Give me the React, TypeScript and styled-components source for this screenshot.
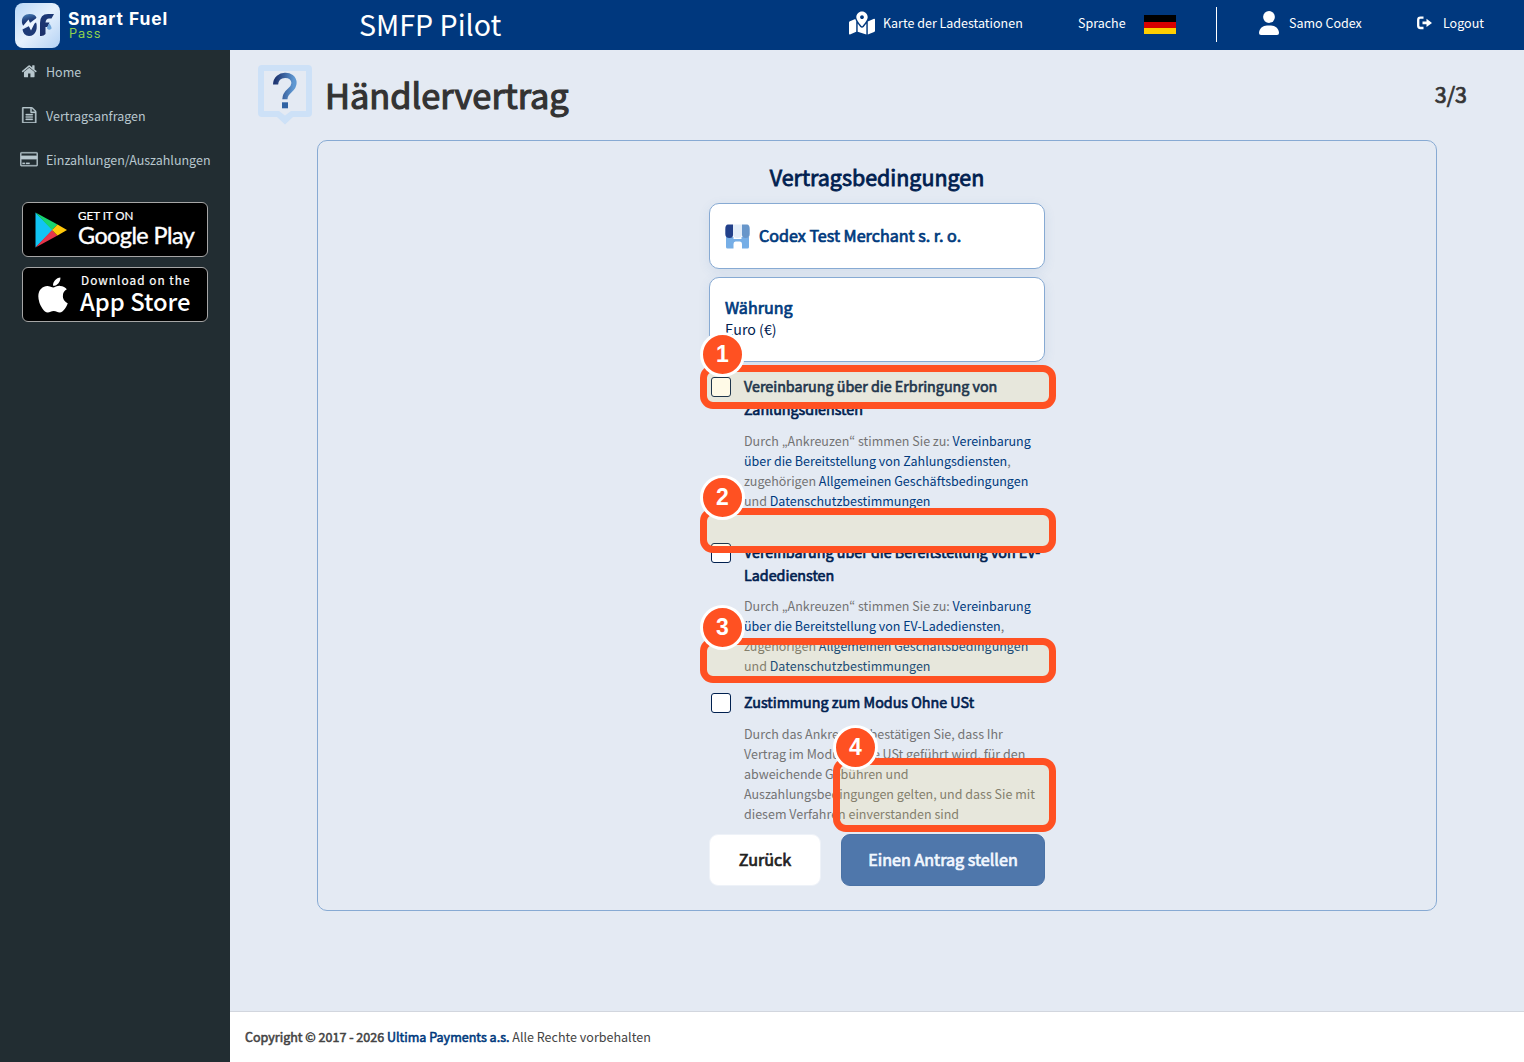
import React from "react";
import styled, { createGlobalStyle, css } from "styled-components";
import { FaApple, FaMapMarkedAlt } from "react-icons/fa";

const GlobalStyle = createGlobalStyle`
  * { box-sizing: border-box; }
  body {
    margin: 0;
    font: 12.51px/20px "Noto Sans CJK KR", "Open Sans", sans-serif;
    color: #333;
    overflow: hidden;
  }
  h1, h2, h3, p { margin: 0; font-weight: 400; }
  a { color: #003a7d; text-decoration: none; }
`;

const semibold = css`
  font-weight: 400;
  -webkit-text-stroke: 0.044em currentColor;
`;

const Page = styled.div`
  position: relative;
  width: 1524px;
  height: 1062px;
  display: grid;
  grid-template: 50px 1fr / 230px 1fr;
  background: #e4eaf3;
`;

/* Top bar */
const Navbar = styled.header`
  grid-column: 1 / -1;
  display: flex;
  align-items: flex-start;
  background: #00387e;
  color: #fff;
`;
const Brand = styled.div`
  display: flex;
  width: 359px;
  padding: 3px 0 0 15px;
  gap: 8px;
`;
const BrandText = styled.div`
  display: flex;
  flex-direction: column;
  padding-top: 7px;
  font-family: Inter, sans-serif;
`;
const BrandName = styled.span`
  font-size: 17.4px;
  line-height: 18px;
  font-weight: 700;
  letter-spacing: 0.95px;
  white-space: nowrap;
`;
const BrandSub = styled.span`
  margin-left: 1px;
  font-size: 12.8px;
  line-height: 12px;
  letter-spacing: 0.85px;
  color: #8fd14f;
`;
const SiteTitle = styled.div`
  width: 490px;
  font-size: 28.6px;
  line-height: 48px;
`;
const NavItem = styled.div<{ $gap: number; $width: number }>`
  display: flex;
  align-items: center;
  height: 46px;
  gap: ${(p) => p.$gap}px;
  width: ${(p) => p.$width}px;
  white-space: nowrap;
`;
const Flag = styled.div`
  width: 32px;
  height: 19px;
  margin-top: 3px;
  background: linear-gradient(#000 0 6.5px, #d80000 6.5px 13px, #ffce00 13px);
`;
const NavDivider = styled.div`
  width: 1px;
  height: 35px;
  margin: 7px 42px 0 0;
  background: #fff;
`;

/* Sidebar */
const Sidebar = styled.nav`
  display: flex;
  flex-direction: column;
  background: #222d32;
  color: #b8c7ce;
`;
const MenuItem = styled.div`
  display: flex;
  align-items: center;
  height: 44px;
  padding-left: 19px;
`;
const MenuIcon = styled.span`
  display: flex;
  justify-content: center;
  width: 20px;
  margin-right: 7px;
  padding-bottom: 2px;
`;
const Badges = styled.div`
  display: flex;
  flex-direction: column;
  gap: 10px;
  padding: 20px 22px;
`;
const StoreBadge = styled.div<{ $pad: number; $gap: number }>`
  display: flex;
  align-items: center;
  gap: ${(p) => p.$gap}px;
  width: 186px;
  height: 55px;
  padding-left: ${(p) => p.$pad}px;
  border: 1px solid #a6a6a6;
  border-radius: 6px;
  background: #000;
  color: #fff;
  white-space: nowrap;
`;
const BadgeText = styled.div<{ $lift: number }>`
  display: flex;
  flex-direction: column;
  padding-bottom: ${(p) => p.$lift}px;
`;
const PlaySmall = styled.span`
  font: 400 11.6px/14px Lato, sans-serif;
  -webkit-text-stroke: 0.2px #fff;
`;
const PlayLarge = styled.span`
  font: 400 23.4px/25px Lato, sans-serif;
  letter-spacing: -0.55px;
  -webkit-text-stroke: 0.4px #fff;
`;
const AppleSmall = styled.span`
  margin-left: 1px;
  font-size: 11.8px;
  line-height: 18px;
  letter-spacing: 1.05px;
  -webkit-text-stroke: 0.2px #fff;
`;
const AppleLarge = styled.span`
  font-size: 23.8px;
  line-height: 23px;
  font-weight: 500;
`;

/* Main column */
const Main = styled.main`
  display: flex;
  flex-direction: column;
`;
const PageHeader = styled.div`
  display: flex;
  align-items: flex-start;
  height: 90px;
  padding: 15px 57px 0 27.5px;
`;
const PageTitle = styled.h1`
  flex: 1;
  margin-left: 12.5px;
  font-size: 34.35px;
  line-height: 59px;
  -webkit-text-stroke: 0.035em currentColor;
`;
const Step = styled.span`
  font-size: 21.4px;
  line-height: 58px;
  -webkit-text-stroke: 0.035em currentColor;
`;
const Panel = styled.section`
  display: flex;
  flex-direction: column;
  align-items: center;
  width: 1120px;
  height: 771px;
  margin-left: 87px;
  padding-top: 23px;
  border: 1px solid #87aad3;
  border-radius: 10px;
`;
const Form = styled.div`
  display: flex;
  flex-direction: column;
  width: 336px;
  color: #00204f;
`;
const FormTitle = styled.h2`
  font-size: 21.45px;
  line-height: 26px;
  margin-bottom: 13px;
  text-align: center;
  -webkit-text-stroke: 0.038em currentColor;
`;
const InfoCard = styled.div<{ $height: number }>`
  display: flex;
  gap: 9px;
  height: ${(p) => p.$height}px;
  margin-bottom: 8px;
  padding: 18px 15px;
  border: 1px solid #87aad3;
  border-radius: 10px;
  background: #fff;
  box-shadow: 0 3px 12px rgba(60, 110, 170, 0.1);
`;
const CardHeading = styled.h3<{ $line: number }>`
  ${semibold}
  font-size: 16.1px;
  line-height: ${(p) => p.$line}px;
  color: #003a7d;
`;
const CardValue = styled.p`
  font-size: 14.2px;
  line-height: 22px;
`;
const Consents = styled.div`
  display: flex;
  flex-direction: column;
  padding-top: 5px;
`;
const Consent = styled.div<{ $after: number }>`
  display: flex;
  gap: 13px;
  padding-left: 2px;
  margin-bottom: ${(p) => p.$after}px;
`;
const Checkbox = styled.span`
  flex: none;
  width: 20px;
  height: 20px;
  margin-top: 2px;
  border: 1px solid #00204f;
  border-radius: 3px;
  background: #fff;
`;
const ConsentTitle = styled.h3`
  ${semibold}
  font-size: 14.3px;
  line-height: 22.86px;
  margin-bottom: 10px;
  white-space: nowrap;
`;
const ConsentText = styled.p`
  color: #737373;
  white-space: nowrap;
`;
const Actions = styled.div`
  display: flex;
  justify-content: space-between;
`;
const Button = styled.button<{ $primary?: boolean }>`
  ${semibold}
  width: ${(p) => (p.$primary ? 204 : 112)}px;
  height: 52px;
  padding: 0 0 2px;
  border: 1px solid ${(p) => (p.$primary ? "#4a72a5" : "#eef2f8")};
  border-radius: 9px;
  background: ${(p) => (p.$primary ? "#4f77ab" : "#fff")};
  color: ${(p) => (p.$primary ? "#f2f7ff" : "#222")};
  font-family: inherit;
  font-size: 16.15px;
`;
const Footer = styled.footer`
  height: 51px;
  margin-top: auto;
  padding: 15px;
  border-top: 1px solid #d2d6de;
  background: #fff;
  color: #444;
  font-size: 12.54px;
`;
const Strong = styled.strong`
  ${semibold}
`;

/* Numbered highlights floating above the form */
const Highlight = styled.div<{ $x: number; $y: number; $w: number; $h: number }>`
  position: absolute;
  left: ${(p) => p.$x}px;
  top: ${(p) => p.$y}px;
  width: ${(p) => p.$w}px;
  height: ${(p) => p.$h}px;
  border: 7px solid #ff5122;
  border-radius: 13px;
  background: rgba(255, 215, 60, 0.12);
`;
const Marker = styled.span`
  position: absolute;
  left: -7px;
  top: -40px;
  width: 45px;
  height: 45px;
  border: 3px solid #fff;
  border-radius: 50%;
  background: #ff5122;
  color: #fff;
  font: bold 23px/38px "Liberation Sans", Arial, sans-serif;
  text-align: center;
`;

const LogoIcon = () => (
  <svg width="45" height="45" viewBox="0 0 45 45">
    <defs>
      <linearGradient id="tile" x1="0" y1="0" x2="1" y2="1">
        <stop offset="0" stopColor="#b9d8f8" />
        <stop offset="0.5" stopColor="#e6f1fd" />
        <stop offset="1" stopColor="#b4d2f4" />
      </linearGradient>
      <linearGradient id="glyph" x1="0" y1="0" x2="0.3" y2="1">
        <stop offset="0" stopColor="#4c86bd" />
        <stop offset="0.6" stopColor="#1d3a77" />
        <stop offset="1" stopColor="#1b2f68" />
      </linearGradient>
      <linearGradient id="flame" x1="0" y1="0" x2="0" y2="1">
        <stop offset="0" stopColor="#1d3a77" />
        <stop offset="1" stopColor="#1b2f68" />
      </linearGradient>
    </defs>
    <rect width="45" height="45" rx="8" fill="url(#tile)" />
    <path d="M7 20C6 14 10 11 14.500 11C18.500 11 21 12.500 21.500 15L9.500 24Q7.500 22.500 7 20Z" fill="url(#glyph)" />
    <path d="M7.500 26.500L21 19.500Q22.500 23 21 28Q19 33 14 33Q8.500 33 7.500 26.500Z" fill="#1d3a77" />
    <path d="M5.500 26L13.500 16.500L15.500 21L22.500 14.500L16 27.500L13.500 22.500Z" fill="#edf6ff" />
    <path d="M25 33V20Q25 11 33 11H39L36.500 15.500H34Q31 15.500 30.500 19.500H34.500L32.500 24H30.500V31Q28.500 33.500 25 33Z" fill="url(#flame)" />
    <path d="M34.300 20.500Q31.700 24 32.200 25.400Q34.300 28 36.400 25.400Q36.900 24 34.300 20.500Z" fill="#6fa4d8" />
  </svg>
);

const UserIcon = () => (
  <svg width="20" height="24" viewBox="0 0 20 24" fill="#fff">
    <circle cx="10" cy="6" r="5.900" />
    <path d="M0 22C0 17.500 4 14.500 8 14.500H12C16 14.500 20 17.500 20 22Q20 24 18 24H2Q0 24 0 22Z" />
  </svg>
);

const LogoutIcon = () => (
  <svg width="16" height="14" viewBox="0 0 16 14">
    <path d="M6.500 1.700H3.500Q1.200 1.700 1.200 4V9.700Q1.200 12 3.500 12H6.500" fill="none" stroke="#fff" strokeWidth="2.300" />
    <path d="M5.500 5.600H9.500V2.800L15 6.900L9.500 11V8.200H5.500Z" fill="#fff" />
  </svg>
);

const HomeIcon = () => (
  <svg width="16.500" height="16.500" viewBox="0 0 1792 1792" fill="currentColor">
    <path d="M1472 992v480q0 26-19 45t-45 19h-384v-384h-256v384h-384q-26 0-45-19t-19-45v-480q0-1 .5-3t.5-3l575-474 575 474q1 2 1 6zm223-69l-62 74q-8 9-21 11h-3q-13 0-21-7l-692-577-692 577q-12 8-24 7-13-2-21-11l-62-74q-8-10-7-23.500t11-21.500l719-599q32-26 76-26t76 26l244 204v-195q0-14 9-23t23-9h192q14 0 23 9t9 23v408l219 182q10 8 11 21.500t-7 23.500z" />
  </svg>
);

const FileIcon = () => (
  <svg width="16.500" height="16.500" viewBox="0 0 1792 1792" fill="currentColor" stroke="currentColor" strokeWidth="40">
    <path d="M1596 380q28 28 48 76t20 88v1152q0 40-28 68t-68 28h-1344q-40 0-68-28t-28-68v-1600q0-40 28-68t68-28h896q40 0 88 20t76 48zm-444-244v376h376q-10-29-22-41l-313-313q-12-12-41-22zm384 1528v-1024h-416q-40 0-68-28t-28-68v-416h-768v1536h1280zm-1024-864q0-14 9-23t23-9h704q14 0 23 9t9 23v64q0 14-9 23t-23 9h-704q-14 0-23-9t-9-23v-64zm736 224q14 0 23 9t9 23v64q0 14-9 23t-23 9h-704q-14 0-23-9t-9-23v-64q0-14 9-23t23-9h704zm0 256q14 0 23 9t9 23v64q0 14-9 23t-23 9h-704q-14 0-23-9t-9-23v-64q0-14 9-23t23-9h704z" />
  </svg>
);

const CardIcon = () => (
  <svg width="18" height="16.500" viewBox="0 0 1920 1792" fill="currentColor" stroke="currentColor" strokeWidth="30">
    <path d="M1760 128q66 0 113 47t47 113v1216q0 66-47 113t-113 47h-1600q-66 0-113-47t-47-113v-1216q0-66 47-113t113-47h1600zm-1600 128q-13 0-22.500 9.500t-9.500 22.500v224h1664v-224q0-13-9.500-22.500t-22.500-9.500h-1600zm1600 1280q13 0 22.500-9.500t9.500-22.500v-608h-1664v608q0 13 9.500 22.500t22.500 9.500h1600zm-1504-128v-128h256v128h-256zm384 0v-128h384v128h-384z" />
  </svg>
);

const PlayIcon = () => (
  <svg width="32" height="36" viewBox="0 0 32 36">
    <path d="M0.500 0.500V35.500L18 18Z" fill="#12c4f4" />
    <path d="M0.500 0.500L22.500 12.500L17 18Z" fill="#18d56f" />
    <path d="M0.500 35.500L22.500 23.500L17 18Z" fill="#e5354b" />
    <path d="M22.500 12.500L32 18L22.500 23.500L17 18Z" fill="#ffc80a" />
  </svg>
);

const HelpIcon = () => (
  <svg width="55" height="60" viewBox="0 0 55 60">
    <defs>
      <linearGradient id="help" x1="0" y1="0.100" x2="1" y2="0.200">
        <stop offset="0" stopColor="#1f3672" />
        <stop offset="1" stopColor="#5f98d2" />
      </linearGradient>
    </defs>
    <path d="M4 0H50Q54 0 54 4V48Q54 52 50 52H35L27 59.500L19 52H4Q0 52 0 48V4Q0 0 4 0Z" fill="#cde1f7" />
    <path d="M6 6H48V46H33L27 50.500L21 46H6Z" fill="#e4eaf3" />
    <path d="M17.600 19.500C18 7.500 36 7.500 36 18C36 26 26.900 25 26.900 34.300" fill="none" stroke="url(#help)" strokeWidth="5.200" />
    <rect x="24" y="37.300" width="6" height="6" fill="#2f62a3" />
  </svg>
);

const MerchantIcon = () => (
  <svg width="25" height="27" viewBox="0 -2 25 27">
    <path d="M1 13H8.500V15H16.500V13H24V23Q24 24.500 22.500 24.500H17V20Q17 17.500 15 17.500H10.500Q8.500 17.500 8.500 20V24.500H2.500Q1 24.500 1 23Z" fill="#76aee6" />
    <path d="M8 0.500H17V10Q17 14 12.500 14Q8 14 8 10Z" fill="#e3edf8" />
    <path d="M3 0.500H8V11Q8 14 4.500 14Q0.300 14 0.300 10V5Q0.300 0.500 3 0.500Z" fill="#22408a" />
    <path d="M17 0.500H22Q24.700 0.500 24.700 5V10Q24.700 14 20.500 14Q17 14 17 11Z" fill="#6796ca" />
  </svg>
);

const highlights = [
  { x: 700, y: 365, w: 356, h: 44 },
  { x: 700, y: 508, w: 356, h: 45 },
  { x: 700, y: 638, w: 356, h: 45 },
  { x: 833, y: 758, w: 223, h: 74 },
];

export default function App() {
  return (
    <Page>
      <GlobalStyle />
      <Navbar>
        <Brand>
          <LogoIcon />
          <BrandText>
            <BrandName>Smart Fuel</BrandName>
            <BrandSub>Pass</BrandSub>
          </BrandText>
        </Brand>
        <SiteTitle>SMFP Pilot</SiteTitle>
        <NavItem $gap={8} $width={229}>
          <FaMapMarkedAlt size={26} />
          Karte der Ladestationen
        </NavItem>
        <NavItem $gap={18} $width={138}>
          Sprache
          <Flag />
        </NavItem>
        <NavDivider />
        <NavItem $gap={10} $width={158}>
          <UserIcon />
          Samo Codex
        </NavItem>
        <NavItem $gap={10} $width={80}>
          <LogoutIcon />
          Logout
        </NavItem>
      </Navbar>

      <Sidebar>
        <MenuItem><MenuIcon><HomeIcon /></MenuIcon>Home</MenuItem>
        <MenuItem><MenuIcon><FileIcon /></MenuIcon>Vertragsanfragen</MenuItem>
        <MenuItem><MenuIcon><CardIcon /></MenuIcon>Einzahlungen/Auszahlungen</MenuItem>
        <Badges>
          <StoreBadge $pad={12} $gap={11}>
            <PlayIcon />
            <BadgeText $lift={2}>
              <PlaySmall>GET IT ON</PlaySmall>
              <PlayLarge>Google Play</PlayLarge>
            </BadgeText>
          </StoreBadge>
          <StoreBadge $pad={10} $gap={7}>
            <FaApple size={40} />
            <BadgeText $lift={6}>
              <AppleSmall>Download on the</AppleSmall>
              <AppleLarge>App Store</AppleLarge>
            </BadgeText>
          </StoreBadge>
        </Badges>
      </Sidebar>

      <Main>
        <PageHeader>
          <HelpIcon />
          <PageTitle>Händlervertrag</PageTitle>
          <Step>3/3</Step>
        </PageHeader>
        <Panel>
          <Form>
            <FormTitle>Vertragsbedingungen</FormTitle>
            <InfoCard $height={66}>
              <MerchantIcon />
              <CardHeading $line={27}>Codex Test Merchant s. r. o.</CardHeading>
            </InfoCard>
            <InfoCard $height={85}>
              <div>
                <CardHeading $line={22}>Währung</CardHeading>
                <CardValue>Euro (€)</CardValue>
              </div>
            </InfoCard>
            <Consents>
              <Consent $after={30}>
                <Checkbox />
                <div>
                  <ConsentTitle>Vereinbarung über die Erbringung von<br />Zahlungsdiensten</ConsentTitle>
                  <ConsentText>
                    Durch „Ankreuzen“ stimmen Sie zu: <a>Vereinbarung<br />über die Bereitstellung von Zahlungsdiensten</a>,<br />
                    zugehörigen <a>Allgemeinen Geschäftsbedingungen</a><br />und <a>Datenschutzbestimmungen</a>
                  </ConsentText>
                </div>
              </Consent>
              <Consent $after={14.5}>
                <Checkbox />
                <div>
                  <ConsentTitle>Vereinbarung über die Bereitstellung von EV-<br />Ladediensten</ConsentTitle>
                  <ConsentText>
                    Durch „Ankreuzen“ stimmen Sie zu: <a>Vereinbarung<br />über die Bereitstellung von EV-Ladediensten</a>,<br />
                    zugehörigen <a>Allgemeinen Geschäftsbedingungen</a><br />und <a>Datenschutzbestimmungen</a>
                  </ConsentText>
                </div>
              </Consent>
              <Consent $after={10}>
                <Checkbox />
                <div>
                  <ConsentTitle>Zustimmung zum Modus Ohne USt</ConsentTitle>
                  <ConsentText>
                    Durch das Ankreuzen bestätigen Sie, dass Ihr<br />Vertrag im Modus Ohne USt geführt wird, für den<br />
                    abweichende Gebühren und<br />Auszahlungsbedingungen gelten, und dass Sie mit<br />diesem Verfahren einverstanden sind
                  </ConsentText>
                </div>
              </Consent>
            </Consents>
            <Actions>
              <Button>Zurück</Button>
              <Button $primary>Einen Antrag stellen</Button>
            </Actions>
          </Form>
        </Panel>
        <Footer>
          <Strong>Copyright © 2017 - 2026 <a>Ultima Payments a.s.</a></Strong> Alle Rechte vorbehalten
        </Footer>
      </Main>

      {highlights.map((h, i) => (
        <Highlight key={i} $x={h.x} $y={h.y} $w={h.w} $h={h.h}>
          <Marker>{i + 1}</Marker>
        </Highlight>
      ))}
    </Page>
  );
}
